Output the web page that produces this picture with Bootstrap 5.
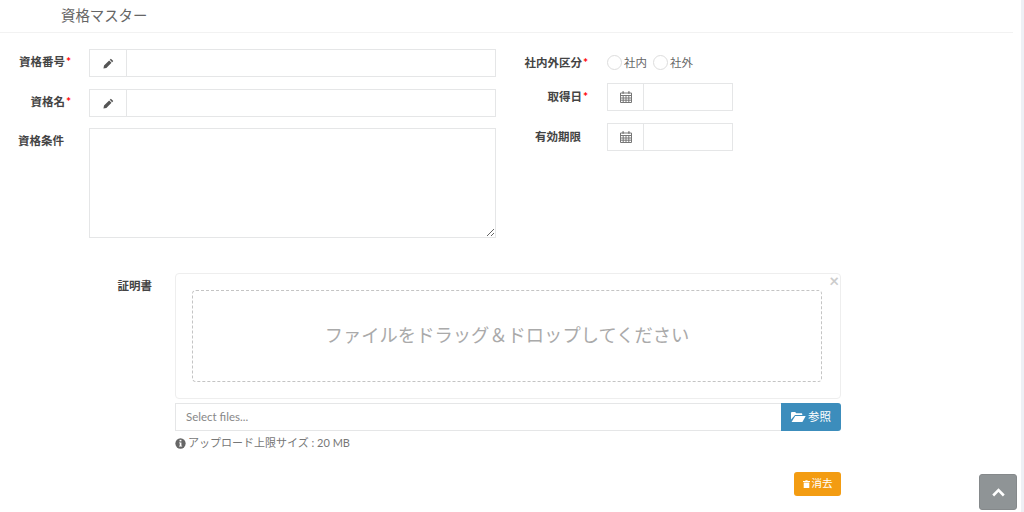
<!DOCTYPE html>
<html lang="ja">

<head>
    <meta charset="UTF-8">
    <meta name="viewport" content="width=device-width, initial-scale=1.0">
    <title>資格マスター</title>
    <link href="https://cdn.jsdelivr.net/npm/bootstrap@5.3.0/dist/css/bootstrap.min.css" rel="stylesheet">
    <style>
        body {
            background-color: #fff;
            color: #555;
            font-family: "Lato", "Noto Sans CJK JP", sans-serif;
            font-size: 11.3px;
            overflow: hidden;
        }

        .page-wrap {
            width: 1024px;
            height: 512px;
            border-right: 3px solid #eef0f5;
        }

        .page-head {
            width: 1013px;
            height: 33px;
            padding: 5px 0 0 61px;
            border-bottom: 1px solid #f2f2f2;
            font-size: 14.4px;
            line-height: 21px;
            color: #666;
        }

        .form-top {
            padding-top: 16px;
        }

        .left-side {
            width: 496px;
        }

        .field-row {
            margin-bottom: 12px;
        }

        .field-row-short {
            margin-bottom: 11px;
        }

        .field-label {
            font-weight: 700;
            font-size: 11.5px;
            color: #444;
            text-align: right;
            line-height: 16px;
        }

        .left-side .field-label {
            width: 71px;
            margin-right: 18px;
            padding-top: 5px;
            flex: none;
        }

        .right-side .field-label {
            width: 76px;
            margin-left: 16px;
            margin-right: 19px;
            flex: none;
        }

        .left-side .no-star,
        .right-side .no-star {
            padding-right: 7px;
        }

        .req {
            color: #f00;
            margin-left: 1px;
            font-size: 12px;
        }

        .plain-group {
            height: 28px;
            border: 1px solid #e5e6e7;
            background: #fff;
        }

        .group-icon {
            width: 37px;
            height: 100%;
            flex: none;
            border-right: 1px solid #e5e6e7;
            color: #555;
        }

        .wide-group {
            width: 407px;
        }

        .date-group {
            width: 126px;
        }

        .date-group .group-icon {
            width: 36px;
        }

        .cond-box {
            display: block;
            width: 407px;
            height: 110px;
            border: 1px solid #e5e6e7;
            border-radius: 0;
            resize: both;
        }

        .radio-row {
            height: 15px;
            margin-top: 6px;
            margin-bottom: 13px;
        }

        .radio-dot {
            width: 15px;
            height: 15px;
            border: 1px solid #ddd;
            border-radius: 50%;
            background: #fff;
            flex: none;
        }

        .radio-text {
            color: #666;
            font-size: 11.5px;
            line-height: 15px;
            margin-left: 2px;
            margin-right: 6px;
        }

        .upload-zone {
            margin-top: 35px;
        }

        .upload-label {
            width: 152px;
            margin-right: 23px;
            text-align: right;
            font-weight: 700;
            font-size: 11.5px;
            color: #444;
            line-height: 16px;
            padding-top: 5px;
            flex: none;
        }

        .upload-col {
            width: 666px;
        }

        .drop-frame {
            height: 126px;
            border: 1px solid #eee;
            border-radius: 4px;
            padding: 16px 18px 16px 16px;
        }

        .drop-close {
            top: -1px;
            right: 1px;
            font-size: 17px;
            line-height: 16px;
            color: #ccc;
            font-weight: 700;
        }

        .drop-inner {
            height: 92px;
            border: 1px dashed #c4c4c4;
            border-radius: 4px;
            font-size: 18.3px;
            color: #aaa;
        }

        .browse-row {
            height: 28px;
            margin-top: 4px;
        }

        .browse-name {
            height: 28px;
            border: 1px solid #e5e6e7;
            border-right: 0;
            padding-left: 10px;
            color: #888;
            font-size: 11.5px;
            line-height: 26px;
        }

        .browse-btn {
            width: 60px;
            height: 28px;
            background: #3c8dbc;
            color: #fff;
            border-radius: 0 3px 3px 0;
            font-size: 11.5px;
            gap: 2px;
        }

        .upload-note {
            margin-top: 4px;
            color: #777;
            font-size: 11px;
            line-height: 16px;
            gap: 2px;
        }

        .clear-row {
            margin-top: 21px;
        }

        .clear-btn {
            width: 47px;
            height: 24px;
            background: #f39c12;
            color: #fff;
            border-radius: 3px;
            font-size: 10.5px;
            gap: 2px;
        }

        .to-top {
            position: fixed;
            left: 979px;
            top: 474px;
            width: 38px;
            height: 36px;
            background: #8f9496;
            border: 1px solid #85898b;
            border-radius: 3px;
        }
    </style>
</head>

<body>
    <div class="page-wrap">
        <div class="page-head">資格マスター</div>

        <div class="form-top d-flex">
            <div class="left-side">
                <div class="field-row d-flex">
                    <div class="field-label">資格番号<span class="req">*</span></div>
                    <div class="plain-group wide-group d-flex">
                        <div class="group-icon d-flex align-items-center justify-content-center">
                            <svg width="11" height="11" viewBox="0 0 12 12"><path fill="#555" d="M8.6.8l2.6 2.6-1.2 1.2-2.6-2.6zM6.7 2.7l2.6 2.6-5.6 5.6L.5 11.5l.6-3.2z"/></svg>
                        </div>
                    </div>
                </div>
                <div class="field-row-short d-flex">
                    <div class="field-label">資格名<span class="req">*</span></div>
                    <div class="plain-group wide-group d-flex">
                        <div class="group-icon d-flex align-items-center justify-content-center">
                            <svg width="11" height="11" viewBox="0 0 12 12"><path fill="#555" d="M8.6.8l2.6 2.6-1.2 1.2-2.6-2.6zM6.7 2.7l2.6 2.6-5.6 5.6L.5 11.5l.6-3.2z"/></svg>
                        </div>
                    </div>
                </div>
                <div class="d-flex">
                    <div class="field-label no-star">資格条件</div>
                    <textarea class="cond-box"></textarea>
                </div>
            </div>

            <div class="right-side">
                <div class="radio-row d-flex align-items-center">
                    <div class="field-label">社内外区分<span class="req">*</span></div>
                    <span class="radio-dot"></span>
                    <span class="radio-text">社内</span>
                    <span class="radio-dot"></span>
                    <span class="radio-text">社外</span>
                </div>
                <div class="field-row d-flex align-items-center">
                    <div class="field-label">取得日<span class="req">*</span></div>
                    <div class="plain-group date-group d-flex">
                        <div class="group-icon d-flex align-items-center justify-content-center">
                            <svg width="12" height="12" viewBox="0 0 12 12"><path fill="none" stroke="#777" d="M.5 2h11v9.5H.5zM.5 4.5h11M.5 7h11M.5 9.2h11M3.2 4.5v7M6 4.5v7M8.8 4.5v7"/><path fill="#777" d="M2.4.3h1.4v2.4H2.4zM8.2.3h1.4v2.4H8.2z"/></svg>
                        </div>
                    </div>
                </div>
                <div class="field-row d-flex align-items-center">
                    <div class="field-label no-star">有効期限</div>
                    <div class="plain-group date-group d-flex">
                        <div class="group-icon d-flex align-items-center justify-content-center">
                            <svg width="12" height="12" viewBox="0 0 12 12"><path fill="none" stroke="#777" d="M.5 2h11v9.5H.5zM.5 4.5h11M.5 7h11M.5 9.2h11M3.2 4.5v7M6 4.5v7M8.8 4.5v7"/><path fill="#777" d="M2.4.3h1.4v2.4H2.4zM8.2.3h1.4v2.4H8.2z"/></svg>
                        </div>
                    </div>
                </div>
            </div>
        </div>

        <div class="upload-zone d-flex">
            <div class="upload-label">証明書</div>
            <div class="upload-col">
                <div class="drop-frame position-relative">
                    <span class="drop-close position-absolute">×</span>
                    <div class="drop-inner d-flex align-items-center justify-content-center">ファイルをドラッグ＆ドロップしてください</div>
                </div>
                <div class="browse-row d-flex">
                    <div class="browse-name flex-grow-1">Select files...</div>
                    <div class="browse-btn d-flex align-items-center justify-content-center">
                        <svg width="15" height="12" viewBox="0 0 15 12"><path fill="#fff" d="M0 2.2C0 1.4.5 1 1.2 1h3l1 1.3h5c.7 0 1.1.4 1.1 1.1v.7H4L0 8.6z"/><path fill="#fff" d="M4.2 5h10.5L11.4 11H0.6z"/></svg>
                        <span>参照</span>
                    </div>
                </div>
                <div class="upload-note d-flex align-items-center">
                    <svg width="11" height="11" viewBox="0 0 12 12"><circle cx="6" cy="6" r="5.6" fill="#666"/><rect x="5" y="2" width="2" height="1.7" fill="#fff"/><path fill="#fff" d="M4.4 4.8H7v3.6h.8v1H4.4v-1h.8V5.8h-.8z"/></svg>
                    <span>アップロード上限サイズ : 20 MB</span>
                </div>
                <div class="clear-row d-flex justify-content-end">
                    <div class="clear-btn d-flex align-items-center justify-content-center">
                        <svg width="7" height="8" viewBox="0 0 8 9"><path fill="#fff" d="M0 1.2h2.5L3 .3h2l.5.9H8v1H0zM.8 2.8h6.4V9H.8z"/></svg>
                        <span>消去</span>
                    </div>
                </div>
            </div>
        </div>
    </div>

    <div class="to-top d-flex align-items-center justify-content-center">
        <svg width="13" height="9" viewBox="0 0 13 9"><path fill="none" stroke="#fff" stroke-width="2.6" d="M1.2 7.5L6.5 2.2l5.3 5.3"/></svg>
    </div>

    <script src="https://cdn.jsdelivr.net/npm/bootstrap@5.3.0/dist/js/bootstrap.bundle.min.js"></script>
</body>

</html>
